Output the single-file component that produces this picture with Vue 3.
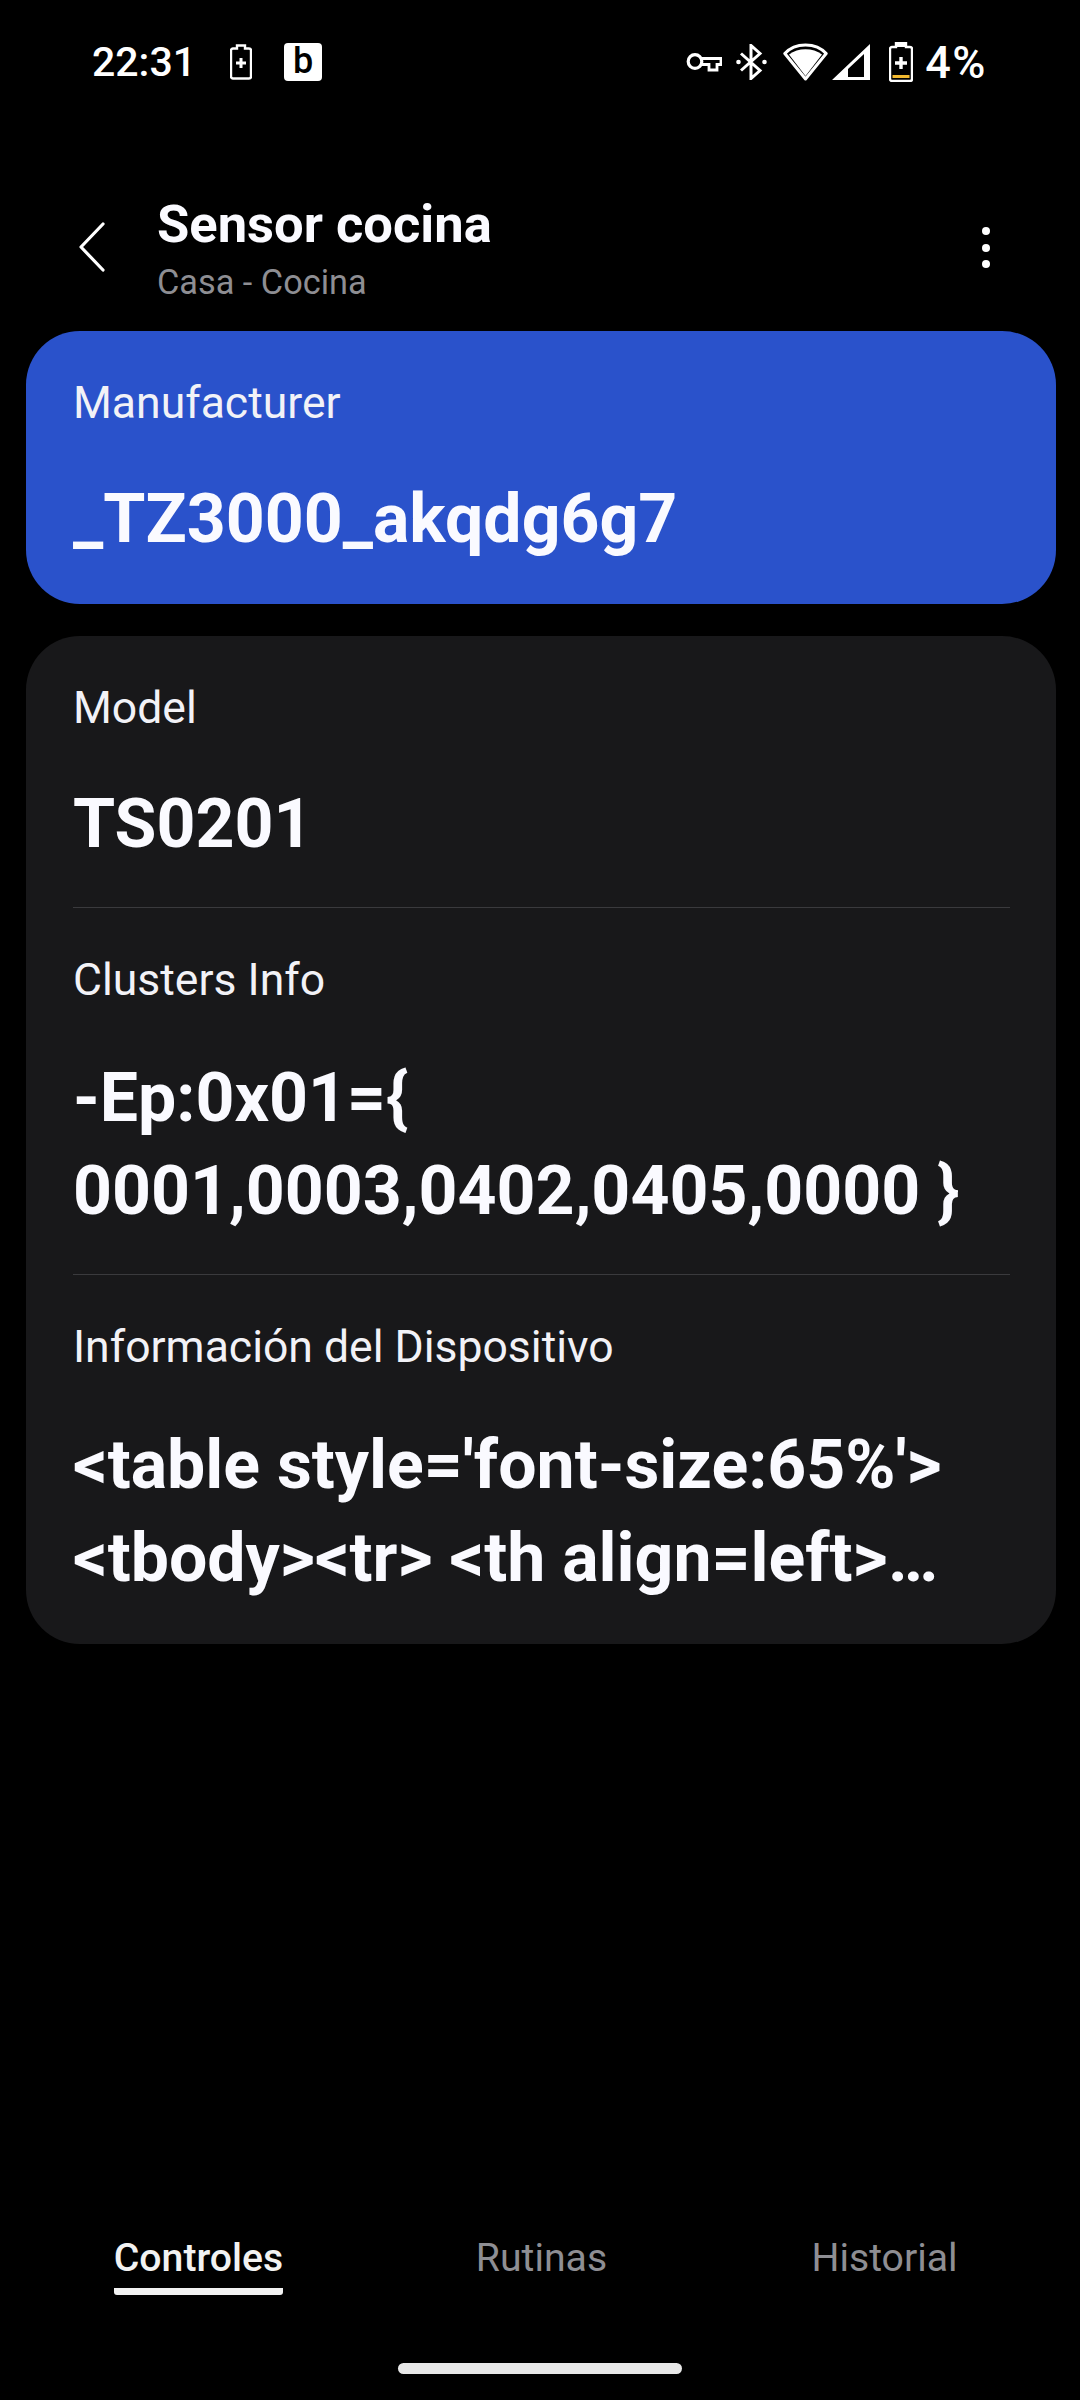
<template>
  <div class="screen">
    <div class="status-bar">
      <span class="time">22:31</span>
      <svg class="st-charge" width="22" height="36" viewBox="0 0 22 36">
        <path d="M7 1.5h8v3h4a2 2 0 0 1 2 2v26a2 2 0 0 1-2 2H3a2 2 0 0 1-2-2v-26a2 2 0 0 1 2-2h4z" fill="none" stroke="#fff" stroke-width="2.4" />
        <path d="M11 14v10M6 19h10" stroke="#fff" stroke-width="3" />
      </svg>
      <span class="b-badge">b</span>
      <div class="status-right">
        <svg class="ic-key" width="36" height="20" viewBox="0 0 36 20">
          <circle cx="9" cy="9.5" r="6.8" fill="none" stroke="#fff" stroke-width="3.2" />
          <path d="M15.5 6.5H35v6h-4v5.5h-8v-5.5h-7.5" fill="none" stroke="#fff" stroke-width="2.8" />
        </svg>
        <svg class="ic-bt" width="31" height="36" viewBox="0 0 31 36">
          <path d="M5 9.5l19 17-9 8V1.500l9 8-19 17" fill="none" stroke="#fff" stroke-width="3" />
          <circle cx="2.500" cy="18" r="2.300" fill="#fff" />
          <circle cx="28.500" cy="18" r="2.300" fill="#fff" />
        </svg>
        <svg class="ic-wifi" width="45" height="38" viewBox="0 0 45 38">
          <path d="M1.800 10.500C12-1 33-1 43.200 10.500L22.500 36z" fill="none" stroke="#fff" stroke-width="3" stroke-linejoin="round" />
          <path d="M6 11.500C15 4.500 30 4.500 39 11.500L22.500 33z" fill="#fff" />
        </svg>
        <svg class="ic-signal" width="38" height="36" viewBox="0 0 38 36">
          <path fill-rule="evenodd" d="M38 0v36H0zM16 25v8h16V10z" fill="#fff" />
        </svg>
        <svg class="ic-bat" width="24" height="40" viewBox="0 0 24 40">
          <path d="M7 1h10v4h4a2 2 0 0 1 2 2v30a2 2 0 0 1-2 2H3a2 2 0 0 1-2-2V7a2 2 0 0 1 2-2h4z" fill="none" stroke="#fff" stroke-width="2.400" />
          <rect x="7" y="1" width="10" height="4" fill="#fff" />
          <path d="M12 15v12M6 21h12" stroke="#fff" stroke-width="3.400" />
          <rect x="3.500" y="33" width="17" height="3" fill="#f2b92f" />
        </svg>
        <span class="pct">4%</span>
      </div>
    </div>

    <header class="app-bar">
      <svg class="back" width="26" height="50" viewBox="0 0 26 50">
        <path d="M24 2L2 25l22 23" fill="none" stroke="#fff" stroke-width="3.200" stroke-linecap="round" stroke-linejoin="round" />
      </svg>
      <div class="titles">
        <div class="title">Sensor cocina</div>
        <div class="subtitle">Casa - Cocina</div>
      </div>
      <div class="more">
        <i></i><i></i><i></i>
      </div>
    </header>

    <section class="card card-blue">
      <div class="info-row">
        <div class="label">Manufacturer</div>
        <div class="value">_TZ3000_akqdg6g7</div>
      </div>
    </section>

    <section class="card card-dark">
      <div v-for="row in rows" :key="row.label" class="info-row">
        <div class="label">{{ row.label }}</div>
        <div class="value" :class="{ clamp: row.clamp }">{{ row.value }}</div>
      </div>
    </section>

    <nav class="tabs">
      <div v-for="tab in tabs" :key="tab" class="tab" :class="{ active: tab === 'Controles' }">
        <span>{{ tab }}</span>
      </div>
    </nav>
    <div class="home-bar"></div>
  </div>
</template>

<script setup>
const rows = [
  { label: 'Model', value: 'TS0201' },
  { label: 'Clusters Info', value: '-Ep:0x01={\n0001,0003,0402,0405,0000 }' },
  {
    label: 'Información del Dispositivo',
    value: "<table style='font-size:65%'>\n<tbody><tr> <th align=left> Modelo</th></tr></tbody>",
    clamp: true
  }
]

const tabs = ['Controles', 'Rutinas', 'Historial']
</script>

<style>
body {
  background: #000;
}
</style>

<style scoped>
.screen {
  width: 1080px;
  height: 2400px;
  background: #000;
  color: #fff;
  font-family: Roboto, "Noto Sans", sans-serif;
  display: flex;
  flex-direction: column;
  overflow: hidden;
}

.status-bar {
  height: 124px;
  flex: none;
  display: flex;
  align-items: center;
  padding: 0 93px 0 92px;
  box-sizing: border-box;
}

.time {
  font-size: 41px;
  font-weight: 500;
  width: 138px;
}

.b-badge {
  width: 38px;
  height: 38px;
  margin-left: 32px;
  background: #fff;
  color: #000;
  border-radius: 4px;
  font-size: 36px;
  font-weight: 500;
  line-height: 36px;
  text-align: center;
}

.status-right {
  margin-left: auto;
  display: flex;
  align-items: center;
}

.ic-bt {
  margin-left: 14px;
}

.ic-wifi {
  margin-left: 16px;
}

.ic-signal {
  margin-left: 4px;
}

.ic-bat {
  margin-left: 19px;
}

.pct {
  margin-left: 12px;
  font-size: 45px;
  font-weight: 500;
  letter-spacing: 1.500px;
}

.app-bar {
  height: 207px;
  flex: none;
  display: flex;
  align-items: flex-start;
  padding-left: 79px;
}

.back {
  margin-top: 98px;
}

.titles {
  margin-left: 52px;
  margin-top: 68px;
}

.title {
  font-size: 52.500px;
  font-weight: 700;
  line-height: 64px;
  color: #fafaff;
}

.subtitle {
  font-size: 34.300px;
  line-height: 44px;
  margin-top: 4px;
  color: #8e8e93;
}

.more {
  margin-left: auto;
  margin-right: 90px;
  margin-top: 103px;
  display: flex;
  flex-direction: column;
  gap: 8.500px;
}

.more i {
  display: block;
  width: 8px;
  height: 8px;
  border-radius: 50%;
  background: #fff;
}

.card {
  margin: 0 24px 0 26px;
  padding: 0 46px 0 47px;
  border-radius: 54px;
  flex: none;
}

.card-blue {
  background: #2a52cb;
  margin-bottom: 32px;
  padding-bottom: 2px;
}

.card-dark {
  background: #18181a;
  padding-bottom: 3px;
}

.info-row {
  padding: 44px 0 36px;
}

.card-dark .info-row + .info-row {
  border-top: 1px solid #3a3a3d;
}

.label {
  font-size: 44.500px;
  line-height: 56px;
  color: #f2f2f7;
}

.value {
  font-size: 68px;
  font-weight: 700;
  line-height: 93px;
  margin-top: 42px;
  white-space: pre-line;
  color: #fafaff;
}

.info-row + .info-row .value {
  margin-top: 44px;
}

.clamp {
  display: -webkit-box;
  -webkit-line-clamp: 2;
  -webkit-box-orient: vertical;
  overflow: hidden;
}

.tabs {
  margin-top: auto;
  padding: 0 24px 0 27px;
  display: flex;
  flex: none;
}

.tab {
  flex: 1;
  font-size: 39.200px;
  line-height: 50px;
  text-align: center;
  color: #8e8e93;
}

.tab span {
  display: inline-block;
  padding-bottom: 5px;
  border-bottom: 7px solid transparent;
}

.tab.active {
  color: #f2f2f2;
  font-weight: 500;
}

.tab.active span {
  border-bottom-color: #f2f2f2;
  border-radius: 0 0 3px 3px;
}

.home-bar {
  flex: none;
  width: 284px;
  height: 11px;
  margin: 68px auto 26px;
  border-radius: 6px;
  background: #e8e8e8;
}
</style>
